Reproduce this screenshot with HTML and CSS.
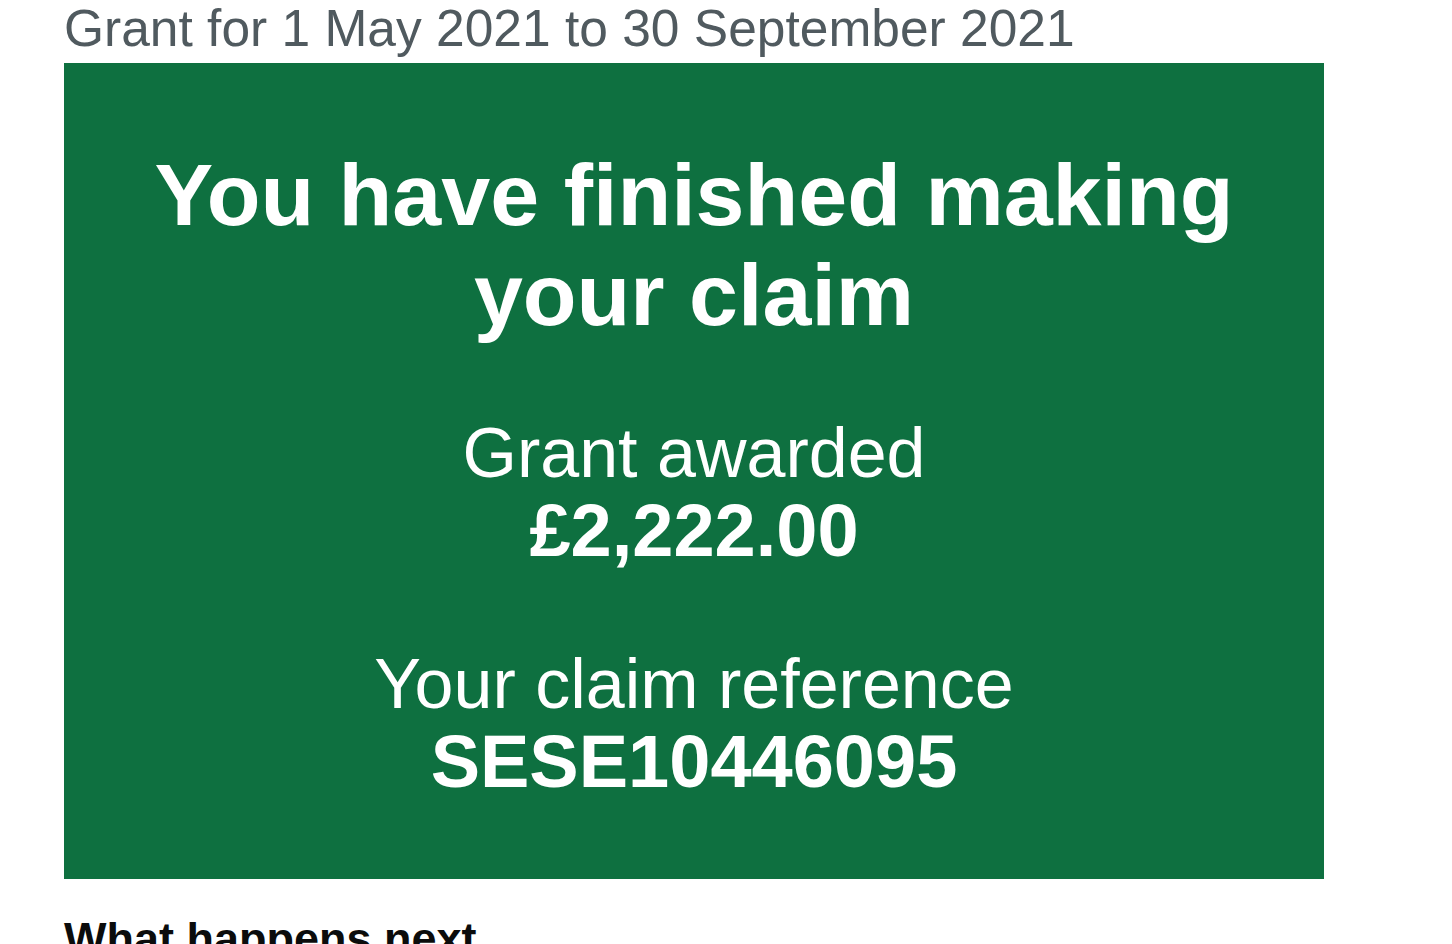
FILE: index.html
```html
<!DOCTYPE html>
<html lang="en">
<head>
<meta charset="utf-8">
<title>You have finished making your claim</title>
<link rel="stylesheet" href="styles.css">
</head>
<body>
<main class="page">
  <span class="caption">Grant for 1 May 2021 to 30 September 2021</span>
  <div class="panel">
    <h1 class="panel-title">You have finished making your claim</h1>
    <div class="panel-body">
      <span class="panel-line">Grant awarded</span>
      <strong class="panel-line">£2,222.00</strong>
      <span class="panel-line panel-gap">Your claim reference</span>
      <strong class="panel-line">SESE10446095</strong>
    </div>
  </div>
  <h2 class="heading-m">What happens next</h2>
</main>
</body>
</html>
```

FILE: styles.css
```css
html, body {
  margin: 0;
  padding: 0;
  background: #ffffff;
}

body {
  font-family: "Liberation Sans", Arial, sans-serif;
  color: #0b0c0c;
}

.page {
  padding-left: 64px;
  width: 1260px;
}

.caption {
  display: block;
  font-size: 51.5px;
  line-height: 56px;
  color: #505a5f;
  margin: 0 0 7px;
}

.panel {
  background: #0e7040;
  color: #ffffff;
  text-align: center;
  padding: 82px 60px 79px;
  box-sizing: border-box;
  width: 1260px;
}

.panel-title {
  margin: 0 0 70px;
  font-size: 88px;
  line-height: 100px;
  font-weight: 700;
}

.panel-body {
  font-size: 70px;
  line-height: 77px;
  font-weight: 400;
}

.panel-line {
  display: block;
  height: 77px;
}

.panel-gap {
  margin-top: 77px;
}

.panel-body strong {
  font-weight: 700;
  font-size: 74px;
  line-height: 77px;
}

.heading-m {
  margin: 35px 0 0;
  font-size: 45px;
  line-height: 50px;
  font-weight: 700;
  color: #0b0c0c;
}
```
